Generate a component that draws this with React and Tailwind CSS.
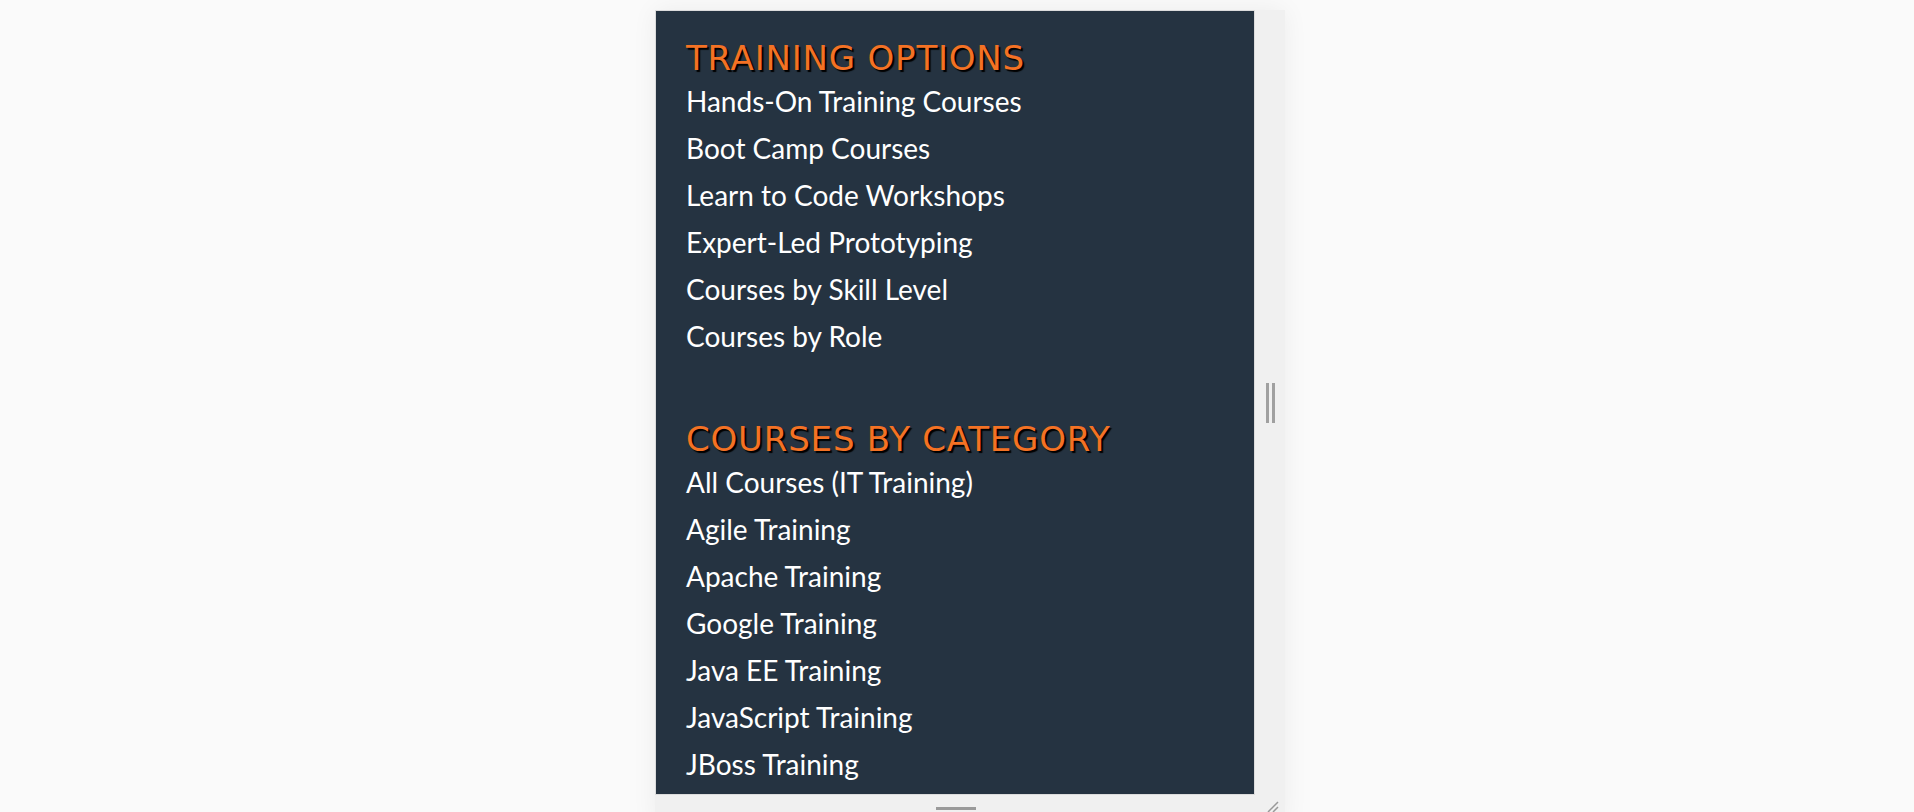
import React from 'react';

const groups = [
  {
    title: 'Training Options',
    links: [
      'Hands-On Training Courses',
      'Boot Camp Courses',
      'Learn to Code Workshops',
      'Expert-Led Prototyping',
      'Courses by Skill Level',
      'Courses by Role',
    ],
  },
  {
    title: 'Courses by Category',
    links: [
      'All Courses (IT Training)',
      'Agile Training',
      'Apache Training',
      'Google Training',
      'Java EE Training',
      'JavaScript Training',
      'JBoss Training',
    ],
  },
];

const App = () => {
  return (
    <div className="h-[812px] overflow-hidden bg-[#fafafa]">
      <div className="ml-[655px] mt-[10px] w-[630px] bg-[#f0f0f0] shadow-[0_0_24px_rgba(0,0,0,0.06)] flex flex-col">
        <div className="flex">
          <div className="w-[600px] h-[785px] bg-[#253341] border border-[#dcdcdc] pl-[30px] pt-[27px] overflow-hidden">
            {groups.map((group, i) => (
              <div key={group.title} className={i > 0 ? 'mt-[59px]' : ''}>
                <h2 className="text-[34px] leading-[40px] uppercase text-[#f47224] font-['DejaVu_Sans',sans-serif] tracking-[0.8px] [text-shadow:2px_2px_1px_#000]">
                  {group.title}
                </h2>
                <ul>
                  {group.links.map(link => (
                    <li key={link}>
                      <a href="#" className="block text-white text-[28px] leading-[47px] font-['Lato',sans-serif]">
                        {link}
                      </a>
                    </li>
                  ))}
                </ul>
              </div>
            ))}
          </div>
          <div className="flex-1 flex items-center justify-center gap-[3px]">
            <div className="w-[3px] h-[40px] bg-[#a0a0a0]"></div>
            <div className="w-[3px] h-[40px] bg-[#a0a0a0]"></div>
          </div>
        </div>
        <div className="h-[30px] relative">
          <div className="w-[40px] h-[3px] bg-[#9a9a9a] ml-[281px] mt-[12px]"></div>
          <svg className="absolute right-[6px] top-[6px] w-[12px] h-[12px]" viewBox="0 0 12 12">
            <path d="M1 11L11 1M6 11L11 6" stroke="#999" strokeWidth="1.5" />
          </svg>
        </div>
      </div>
    </div>
  );
};

export default App;
